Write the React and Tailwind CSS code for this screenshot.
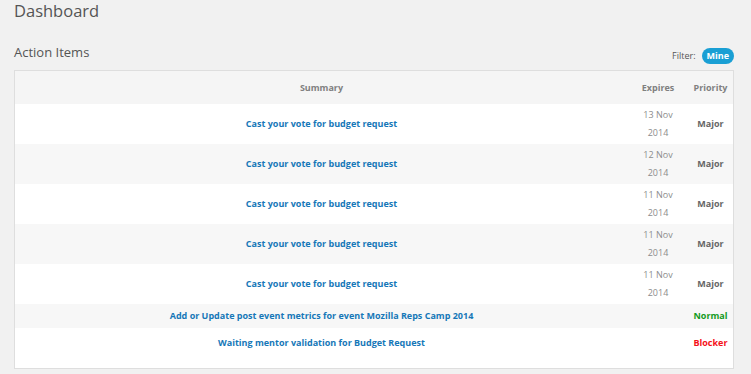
import React from "react";

const rows = [
  { title: "Cast your vote for budget request", date: ["13 Nov", "2014"], priority: "Major" },
  { title: "Cast your vote for budget request", date: ["12 Nov", "2014"], priority: "Major" },
  { title: "Cast your vote for budget request", date: ["11 Nov", "2014"], priority: "Major" },
  { title: "Cast your vote for budget request", date: ["11 Nov", "2014"], priority: "Major" },
  { title: "Cast your vote for budget request", date: ["11 Nov", "2014"], priority: "Major" },
  { title: "Add or Update post event metrics for event Mozilla Reps Camp 2014", date: null, priority: "Normal" },
  { title: "Waiting mentor validation for Budget Request", date: null, priority: "Blocker" },
];

const priorityColor = {
  Major: "text-[#666666]",
  Normal: "text-[#139a22]",
  Blocker: "text-[#f5101a]",
};

const App = () => {
  return (
    <div className="w-[751px] h-[374px] overflow-hidden bg-[#f1f1f1] font-['Open_Sans',sans-serif]">
      <div className="px-[14px]">
        <h1 className="text-[16.5px] leading-[22px] text-[#555555]">Dashboard</h1>
        <div className="flex items-start justify-between mt-[20px] pr-[3px]">
          <h2 className="text-[13px] leading-[20px] text-[#555555]">Action Items</h2>
          <div className="flex items-center gap-[6px] mt-[6px]">
            <span className="text-[9px] text-[#555555]">Filter:</span>
            <span className="rounded-full bg-[#1a9fd4] text-white text-[9px] font-bold px-[5px] leading-[16px]">Mine</span>
          </div>
        </div>
        <div className="mt-[6px] mr-[3px] border border-[#dedede] bg-[#f5f5f5]">
          <div className="flex h-[33px] items-center text-[9px] leading-[14px] font-bold text-[#808080]">
            <div className="flex-1 text-center">Summary</div>
            <div className="w-[60px] text-center">Expires</div>
            <div className="w-[45px] text-center">Priority</div>
          </div>
          {rows.map((row, i) => (
            <div
              key={i}
              className={`flex items-center text-[9px] leading-[14px] ${row.date ? "h-[40px]" : i === 5 ? "h-[24px]" : "h-[40px] pb-[11px]"} ${i % 2 === 0 ? "bg-white" : "bg-[#f7f7f7]"}`}
            >
              <div className="flex-1 text-center">
                <a className="font-bold text-[#1677b8]">{row.title}</a>
              </div>
              <div className="w-[60px] text-center leading-[18px] text-[#8c8c8c]">
                {row.date && (
                  <>
                    <div>{row.date[0]}</div>
                    <div>{row.date[1]}</div>
                  </>
                )}
              </div>
              <div className={`w-[45px] text-center font-bold ${priorityColor[row.priority]}`}>
                {row.priority}
              </div>
            </div>
          ))}
        </div>
      </div>
    </div>
  );
};

export default App;
